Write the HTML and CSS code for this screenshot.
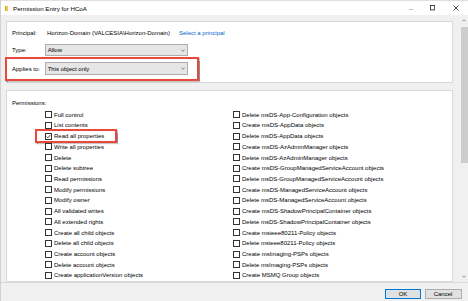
FILE: index.html
```html
<!DOCTYPE html>
<html lang="en">
<head>
<meta charset="utf-8">
<title>Permission Entry for HCoA</title>
<link rel="stylesheet" href="styles.css">
</head>
<body>
<div class="window">
  <div class="titlebar">
    <span class="app-icon"></span>
    <span class="title">Permission Entry for HCoA</span>
    <div class="controls">
      <svg class="ctl-min" width="4" height="10" viewBox="0 0 4 10"><line x1="0" y1="6.5" x2="4" y2="6.5" stroke="#b5b5b5" stroke-width="0.8"/></svg>
      <svg class="ctl-max" width="5" height="10" viewBox="0 0 5 10"><rect x="0.5" y="2.5" width="4.2" height="4.4" fill="none" stroke="#222" stroke-width="0.8"/></svg>
      <svg class="ctl-close" width="6" height="10" viewBox="0 0 6 10"><path d="M0.5 2.5 L5.5 7.5 M5.5 2.5 L0.5 7.5" stroke="#222" stroke-width="0.8"/></svg>
    </div>
  </div>
  <div class="main">
    <div class="content">
      <div class="panel top-panel">
        <div class="field-row principal-row">
          <span class="label label-principal">Principal:</span>
          <span class="value">Horizon-Domain (VALCESIA\Horizon-Domain)</span>
          <span class="link">Select a principal</span>
        </div>
        <div class="field-row type-row">
          <span class="label">Type:</span>
          <div class="combo"><span class="combo-text">Allow</span><svg class="chev" width="4" height="3" viewBox="0 0 4 3"><path d="M0.3 0.6 L2 2.3 L3.7 0.6" fill="none" stroke="#555" stroke-width="0.7"/></svg></div>
        </div>
        <div class="field-row applies-row">
          <span class="label">Applies to:</span>
          <div class="combo"><span class="combo-text">This object only</span><svg class="chev" width="4" height="3" viewBox="0 0 4 3"><path d="M0.3 0.6 L2 2.3 L3.7 0.6" fill="none" stroke="#555" stroke-width="0.7"/></svg></div>
          <div class="highlight highlight-applies"></div>
        </div>
      </div>
      <div class="panel perm-panel">
        <div class="perm-label">Permissions:</div>
        <div class="perm-grid">
          <div class="perm"><span class="box"></span>Full control</div>
          <div class="perm"><span class="box"></span>List contents</div>
          <div class="perm"><span class="box checked"><svg width="5" height="5" viewBox="0 0 5 5"><path d="M0.6 2.6 L1.9 3.9 L4.4 0.9" fill="none" stroke="#222" stroke-width="0.8"/></svg></span>Read all properties<div class="highlight highlight-read"></div></div>
          <div class="perm"><span class="box"></span>Write all properties</div>
          <div class="perm"><span class="box"></span>Delete</div>
          <div class="perm"><span class="box"></span>Delete subtree</div>
          <div class="perm"><span class="box"></span>Read permissions</div>
          <div class="perm"><span class="box"></span>Modify permissions</div>
          <div class="perm"><span class="box"></span>Modify owner</div>
          <div class="perm"><span class="box"></span>All validated writes</div>
          <div class="perm"><span class="box"></span>All extended rights</div>
          <div class="perm"><span class="box"></span>Create all child objects</div>
          <div class="perm"><span class="box"></span>Delete all child objects</div>
          <div class="perm"><span class="box"></span>Create account objects</div>
          <div class="perm"><span class="box"></span>Delete account objects</div>
          <div class="perm"><span class="box"></span>Create applicationVersion objects</div>
          <div class="perm"><span class="box"></span>Delete msDS-App-Configuration objects</div>
          <div class="perm"><span class="box"></span>Create msDS-AppData objects</div>
          <div class="perm"><span class="box"></span>Delete msDS-AppData objects</div>
          <div class="perm"><span class="box"></span>Create msDS-AzAdminManager objects</div>
          <div class="perm"><span class="box"></span>Delete msDS-AzAdminManager objects</div>
          <div class="perm"><span class="box"></span>Create msDS-GroupManagedServiceAccount objects</div>
          <div class="perm"><span class="box"></span>Delete msDS-GroupManagedServiceAccount objects</div>
          <div class="perm"><span class="box"></span>Create msDS-ManagedServiceAccount objects</div>
          <div class="perm"><span class="box"></span>Delete msDS-ManagedServiceAccount objects</div>
          <div class="perm"><span class="box"></span>Create msDS-ShadowPrincipalContainer objects</div>
          <div class="perm"><span class="box"></span>Delete msDS-ShadowPrincipalContainer objects</div>
          <div class="perm"><span class="box"></span>Create msieee80211-Policy objects</div>
          <div class="perm"><span class="box"></span>Delete msieee80211-Policy objects</div>
          <div class="perm"><span class="box"></span>Create msImaging-PSPs objects</div>
          <div class="perm"><span class="box"></span>Delete msImaging-PSPs objects</div>
          <div class="perm"><span class="box"></span>Create MSMQ Group objects</div>
        </div>
      </div>
    </div>
    <div class="scrollbar">
      <div class="sb-btn"><svg width="4" height="3" viewBox="0 0 4 3"><path d="M0.3 2.4 L2 0.7 L3.7 2.4" fill="none" stroke="#606060" stroke-width="0.7"/></svg></div>
      <div class="sb-thumb"></div>
      <div class="sb-track"></div>
      <div class="sb-btn"><svg width="4" height="3" viewBox="0 0 4 3"><path d="M0.3 0.6 L2 2.3 L3.7 0.6" fill="none" stroke="#606060" stroke-width="0.7"/></svg></div>
    </div>
  </div>
  <div class="footer">
    <button class="btn btn-default">OK</button>
    <button class="btn">Cancel</button>
  </div>
</div>
</body>
</html>
```
FILE: styles.css
```css
html, body {
  margin: 0;
  padding: 0;
}
body {
  width: 468px;
  height: 301px;
  overflow: hidden;
  background: #f0f0f0;
  font-family: "Liberation Sans", Arial, sans-serif;
  font-size: 6px;
  color: #000;
}
.window {
  display: flex;
  flex-direction: column;
  height: 301px;
  box-sizing: border-box;
  border-left: 1px solid #d2d2d2;
}
.titlebar {
  height: 15px;
  flex: none;
  display: flex;
  align-items: center;
  background: #fff;
  border-top: 1px solid #e0e0e0;
  box-sizing: border-box;
}
.app-icon {
  width: 3px;
  height: 5px;
  margin-left: 4px;
  background: #f2c94c;
  border-left: 1px solid #d9a520;
  box-sizing: border-box;
}
.title {
  margin-left: 5px;
  font-size: 6.2px;
  color: #000;
}
.controls {
  margin-left: auto;
  display: flex;
  align-items: center;
  padding-right: 8.7px;
}
.ctl-min { margin-right: 17px; }
.ctl-max { margin-right: 18.3px; }
.main {
  flex: 1;
  display: flex;
  min-height: 0;
}
.content {
  flex: 1;
  display: flex;
  flex-direction: column;
  padding: 6px 7px 0 5px;
  min-width: 0;
}
.panel {
  background: #fff;
  border: 1px solid #d9d9d9;
  box-sizing: border-box;
}
.top-panel {
  height: 62px;
  flex: none;
  padding-left: 5px;
}
.field-row {
  display: flex;
  align-items: center;
  height: 12px;
  position: relative;
}
.principal-row { margin-top: 5.3px; }
.type-row { margin-top: 5px; }
.applies-row { margin-top: 6px; height: 12.5px; }
.label {
  width: 33px;
  flex: none;
}
.label-principal { width: 35px; }
.value {
  width: 132px;
  flex: none;
  white-space: nowrap;
}
.link {
  color: #0066cc;
  white-space: nowrap;
}
.combo {
  width: 143px;
  height: 100%;
  box-sizing: border-box;
  border: 1px solid #adadad;
  background: #e6e6e6;
  display: flex;
  align-items: center;
  padding-left: 1.7px;
}
.combo-text { flex: 1; }
.chev { margin-right: 2.3px; }
.highlight {
  position: absolute;
  border: 2.2px solid #e9483b;
  box-sizing: border-box;
  box-shadow: 0.8px 1px 1px rgba(0, 0, 0, 0.45);
  pointer-events: none;
}
.highlight-applies {
  left: -7px;
  top: -5px;
  width: 194px;
  height: 23.4px;
}
.perm-panel {
  flex: 1;
  margin-top: 7px;
  padding-top: 7px;
  overflow: hidden;
}
.perm-label {
  height: 10px;
  line-height: 10px;
  padding-left: 5px;
}
.perm-grid {
  margin-top: 1.3px;
  padding-left: 38px;
  display: grid;
  grid-template-columns: 188px auto;
  grid-template-rows: repeat(16, 10.73px);
  grid-auto-flow: column;
}
.perm {
  display: flex;
  align-items: center;
  gap: 2px;
  white-space: nowrap;
  position: relative;
}
.box {
  width: 7px;
  height: 7px;
  flex: none;
  border: 1px solid #333;
  box-sizing: border-box;
  background: #fff;
  display: flex;
  align-items: center;
  justify-content: center;
}
.box svg { display: block; }
.highlight-read {
  left: -10px;
  top: -1.5px;
  width: 81.7px;
  height: 13.4px;
}
.scrollbar {
  width: 8px;
  flex: none;
  display: flex;
  flex-direction: column;
  background: #f0f0f0;
}
.sb-btn {
  height: 11px;
  flex: none;
  display: flex;
  align-items: center;
  justify-content: center;
}
.sb-thumb {
  height: 136px;
  margin: 0.7px 0.5px 0;
  background: #cdcdcd;
  flex: none;
}
.sb-track { flex: 1; }
.footer {
  height: 19px;
  flex: none;
  display: flex;
  justify-content: flex-end;
  align-items: flex-start;
  gap: 3.5px;
  padding: 5.7px 6.5px 0 0;
  box-sizing: border-box;
  border-top: 1px solid #dadada;
}
.btn {
  width: 37px;
  height: 10px;
  padding: 0;
  margin: 0;
  font-family: "Liberation Sans", Arial, sans-serif;
  font-size: 6px;
  line-height: 8px;
  color: #000;
  background: #e1e1e1;
  border: 1px solid #adadad;
  box-sizing: border-box;
}
.btn-default {
  width: 36px;
  border-color: #0078d7;
}
```
